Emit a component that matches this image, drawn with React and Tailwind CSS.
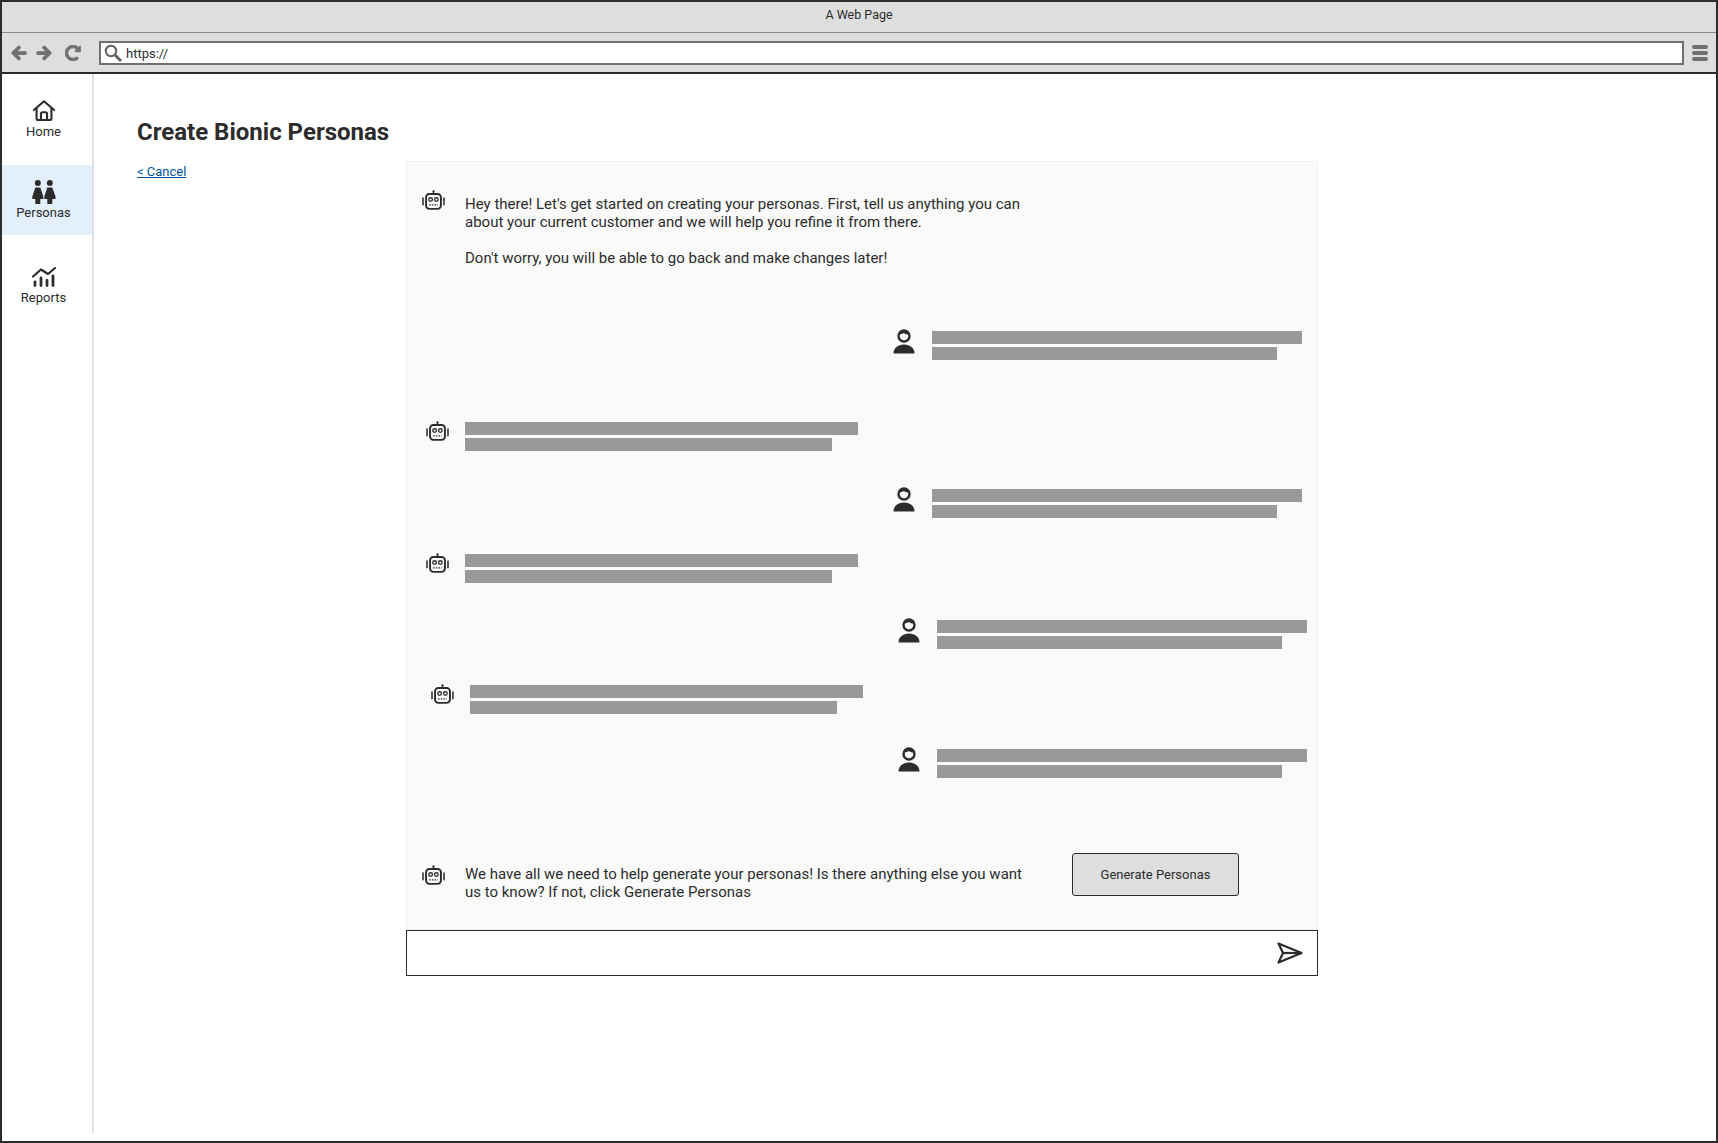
import { FaArrowLeft, FaArrowRight, FaRedoAlt } from 'react-icons/fa'

/* Robot head used for the assistant's messages */
function BotIcon({ className = '' }) {
  return (
    <svg width="23" height="21" viewBox="0 0 24 22" fill="none" stroke="#2c2c2c" className={`shrink-0 ${className}`}>
      <path d="M12 0.500V4" strokeWidth="1.500" />
      <circle cx="12" cy="1.500" r="1.100" fill="#2c2c2c" stroke="none" />
      <rect x="4.200" y="4.200" width="15.600" height="15.600" rx="3.500" strokeWidth="2" />
      <path d="M1 8.500v7M23 8.500v7" strokeWidth="1.600" strokeLinecap="round" />
      <circle cx="9" cy="10" r="1.900" strokeWidth="1.400" />
      <circle cx="15" cy="10" r="1.900" strokeWidth="1.400" />
      <path d="M7.500 15.500h9" strokeWidth="1.400" strokeDasharray="1.600 1.200" />
    </svg>
  )
}

function UserIcon() {
  return (
    <svg width="22" height="25" viewBox="0 0 22 25" className="shrink-0 -mt-[2px]">
      <circle cx="11" cy="7" r="5.500" fill="none" stroke="#2c2c2c" strokeWidth="2.400" />
      <path d="M6.500 5C8 5.500 9.500 5 11 4 12 5.200 14 5.500 15.500 5.500L15 2H7z" fill="#2c2c2c" />
      <path d="M0.500 24.500C0.500 19 5 15.500 11 15.500S21.500 19 21.500 24.500z" fill="#2c2c2c" />
    </svg>
  )
}

function Bars({ top, bottom }) {
  return (
    <div className="flex flex-col gap-[3px]">
      <div className={`h-[13px] bg-[#999999] ${top}`} />
      <div className={`h-[13px] bg-[#999999] ${bottom}`} />
    </div>
  )
}

function UserRow({ className }) {
  return (
    <div className={`flex items-start ${className}`}>
      <UserIcon />
      <div className="ml-[17px]"><Bars top="w-[370px]" bottom="w-[345px]" /></div>
    </div>
  )
}

function BotRow({ className }) {
  return (
    <div className={`flex items-start ${className}`}>
      <BotIcon className="-mt-[1px]" />
      <div className="ml-[16px]"><Bars top="w-[393px]" bottom="w-[367px]" /></div>
    </div>
  )
}

function NavItem({ label, active, className = '', labelClass = '', children }) {
  return (
    <div className={`flex flex-col items-center pr-[7px] ${active ? 'bg-[#e3effb]' : ''} ${className}`}>
      {children}
      <span className={`text-[13px] leading-[16px] text-[#2c2c2c] ${labelClass}`}>{label}</span>
    </div>
  )
}

export default function App() {
  return (
    <div className="w-[1718px] h-[1143px] border-2 border-[#2c2c2c] flex flex-col bg-white overflow-hidden font-['Roboto',sans-serif] text-[#2c2c2c]">
      {/* Browser chrome */}
      <div className="h-[31px] shrink-0 bg-[#dedede] border-b border-[#8a8a8a] flex items-center justify-center text-[12.500px] pb-[3px]">
        A Web Page
      </div>
      <div className="h-[41px] shrink-0 bg-[#dedede] border-b-2 border-[#2c2c2c] flex items-center pl-[9px] pr-[8px]">
        <FaArrowLeft size={16} color="#707070" stroke="#707070" strokeWidth={40} />
        <FaArrowRight size={16} color="#707070" stroke="#707070" strokeWidth={40} className="ml-[9px]" />
        <FaRedoAlt size={16} color="#707070" stroke="#707070" strokeWidth={30} className="ml-[13px]" />
        <div className="ml-[18px] flex-1 h-[24px] bg-white border-2 border-[#707070] flex items-center pl-[3px] text-[13px]">
          <svg width="18" height="18" viewBox="0 0 18 18" fill="none" stroke="#606060" className="shrink-0">
            <circle cx="7" cy="7" r="5.200" strokeWidth="2" />
            <path d="M11 11l6 6" strokeWidth="2.800" />
          </svg>
          <span className="ml-[4px] pt-[2px]">https://</span>
        </div>
        <div className="ml-[8px] flex flex-col gap-[2px]">
          <div className="w-[16px] h-[4px] rounded-full bg-[#707070]" />
          <div className="w-[16px] h-[4px] rounded-full bg-[#707070]" />
          <div className="w-[16px] h-[4px] rounded-full bg-[#707070]" />
        </div>
      </div>

      <div className="flex flex-1 min-h-0">
        {/* Sidebar */}
        <div className="w-[92px] shrink-0 mb-[8px] border-r-2 border-[#e0e0e0] flex flex-col">
          <NavItem label="Home" className="pt-[26px] h-[91px]">
            <svg width="24" height="21" viewBox="0 0 26 24" fill="none" stroke="#2c2c2c" strokeWidth="2.400" strokeLinejoin="round" strokeLinecap="round" className="mb-[3px]">
              <path d="M1.500 11.500L13 1.500l11.500 10" />
              <path d="M4.500 9.500V21a2 2 0 0 0 2 2h13a2 2 0 0 0 2-2V9.500" />
              <path d="M9.500 23v-7a2 2 0 0 1 2-2h3a2 2 0 0 1 2 2v7" />
            </svg>
          </NavItem>
          <NavItem label="Personas" active labelClass="mt-[1px]" className="pt-[15px] h-[70px]">
            <svg width="24" height="24" viewBox="0 0 24 24" fill="#2c2c2c">
              <circle cx="5.800" cy="3" r="3" />
              <circle cx="17.800" cy="3" r="3" />
              <path d="M3.300 7.500h5l3 9v2.500h-3v5h-5v-5h-3v-2.500z" />
              <path d="M15.300 7.500h5l3.200 9v2.500h-3.200v5h-5v-5h-3v-2.500z" />
            </svg>
          </NavItem>
          <NavItem label="Reports" className="pt-[32px]">
            <svg width="24" height="20" viewBox="0 0 24 20" fill="none" stroke="#2c2c2c" strokeLinecap="round" className="mb-[3px]">
              <path d="M1 9.500L9 2.500l7 4.500 7-6" strokeWidth="2.200" strokeLinejoin="round" />
              <path d="M3 15v3.500M9 11v7.500M15 13.500v5M21 9v9.500" strokeWidth="2.800" />
            </svg>
          </NavItem>
        </div>

        {/* Page content */}
        <div className="flex-1 pl-[43px]">
          <h1 className="mt-[42px] text-[24px] leading-[32px] font-bold">Create Bionic Personas</h1>
          <div className="mt-[13px] flex">
            <a href="#" className="w-[269px] shrink-0 text-[13px] leading-[16px] pt-[3px] text-[#00549b] underline">&lt; Cancel</a>
            <div className="w-[912px] shrink-0">
              <div className="h-[769px] bg-[#fafafa] border border-[#f0f0f0] flex flex-col text-[15px] leading-[18px]">
                <div className="flex mt-[28px] ml-[15px]">
                  <BotIcon />
                  <div className="ml-[20px] mt-[5px] w-[560px]">
                    <p>Hey there! Let's get started on creating your personas. First, tell us anything you can about your current customer and we will help you refine it from there.</p>
                    <p className="mt-[18px]">Don't worry, you will be able to go back and make changes later!</p>
                  </div>
                </div>
                <UserRow className="mt-[64px] ml-[486px]" />
                <BotRow className="mt-[62px] ml-[19px]" />
                <UserRow className="mt-[38px] ml-[486px]" />
                <BotRow className="mt-[36px] ml-[19px]" />
                <UserRow className="mt-[37px] ml-[491px]" />
                <BotRow className="mt-[36px] ml-[24px]" />
                <UserRow className="mt-[35px] ml-[491px]" />
                <div className="flex items-start mt-[75px] ml-[15px]">
                  <BotIcon className="mt-[12px]" />
                  <p className="ml-[20px] mt-[12px] w-[560px]">We have all we need to help generate your personas! Is there anything else you want us to know? If not, click Generate Personas</p>
                  <button className="ml-[47px] w-[167px] h-[43px] bg-[#dedede] border border-[#2c2c2c] rounded-[3px] text-[13px]">Generate Personas</button>
                </div>
              </div>
              <div className="h-[46px] bg-white border border-[#2c2c2c] flex items-center justify-end pr-[14px]">
                <svg width="26" height="22" viewBox="0 0 26 22" fill="none" stroke="#2c2c2c" strokeWidth="2.200" strokeLinejoin="round">
                  <path d="M1.500 1.500L24.500 11 1.500 20.500 6 11z" />
                  <path d="M6 11h18" />
                </svg>
              </div>
            </div>
          </div>
        </div>
      </div>
    </div>
  )
}
